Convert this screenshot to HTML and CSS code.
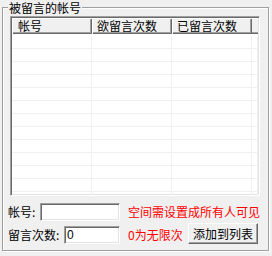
FILE: index.html
```html
<!DOCTYPE html>
<html>
<head>
<meta charset="utf-8">
<link rel="stylesheet" href="styles.css">
</head>
<body>
<div class="group">
  <div class="legend">被留言的帐号</div>
  <div class="list">
    <div class="header">
      <div class="hcell">帐号</div>
      <div class="hcell">欲留言次数</div>
      <div class="hcell">已留言次数</div>
      <div class="hcell filler"></div>
    </div>
    <div class="body">
      <div class="row"><div class="cell"></div><div class="cell"></div><div class="cell"></div><div class="cell filler"></div></div>
      <div class="row"><div class="cell"></div><div class="cell"></div><div class="cell"></div><div class="cell filler"></div></div>
      <div class="row"><div class="cell"></div><div class="cell"></div><div class="cell"></div><div class="cell filler"></div></div>
      <div class="row"><div class="cell"></div><div class="cell"></div><div class="cell"></div><div class="cell filler"></div></div>
      <div class="row"><div class="cell"></div><div class="cell"></div><div class="cell"></div><div class="cell filler"></div></div>
      <div class="row"><div class="cell"></div><div class="cell"></div><div class="cell"></div><div class="cell filler"></div></div>
      <div class="row"><div class="cell"></div><div class="cell"></div><div class="cell"></div><div class="cell filler"></div></div>
      <div class="row"><div class="cell"></div><div class="cell"></div><div class="cell"></div><div class="cell filler"></div></div>
      <div class="row"><div class="cell"></div><div class="cell"></div><div class="cell"></div><div class="cell filler"></div></div>
      <div class="row"><div class="cell"></div><div class="cell"></div><div class="cell"></div><div class="cell filler"></div></div>
      <div class="row"><div class="cell"></div><div class="cell"></div><div class="cell"></div><div class="cell filler"></div></div>
      <div class="row"><div class="cell"></div><div class="cell"></div><div class="cell"></div><div class="cell filler"></div></div>
      <div class="row"><div class="cell"></div><div class="cell"></div><div class="cell"></div><div class="cell filler"></div></div>
    </div>
  </div>
  <div class="form-row first">
    <span class="label w1">帐号:</span>
    <div class="input w-acc"></div>
    <span class="note">空间需设置成所有人可见</span>
  </div>
  <div class="form-row second">
    <span class="label w2">留言次数:</span>
    <div class="input w-cnt">0</div>
    <span class="note short">0为无限次</span>
    <div class="button">添加到列表</div>
  </div>
</div>
</body>
</html>
```

FILE: styles.css
```css
* { box-sizing: border-box; }
html, body {
  margin: 0;
  padding: 0;
  background: #f0f0f0;
  width: 272px;
  height: 256px;
  overflow: hidden;
  font-family: "Noto Sans CJK SC", "Liberation Sans", sans-serif;
  font-size: 12px;
  color: #000;
}
.group {
  position: relative;
  margin: 7px 0 0 2px;
  width: 267px;
  height: 244px;
  border: 1px solid #a0a0a0;
  box-shadow: inset 1px 1px 0 #fff, 1px 1px 0 #fff;
  padding: 8px 0 0 7px;
}
.legend {
  position: absolute;
  top: -8px;
  left: 5px;
  padding: 0 1px;
  line-height: 15px;
  height: 15px;
  background: #f0f0f0;
}
.list {
  width: 250px;
  height: 180px;
  background: #fff;
  border-top: 1px solid #a0a0a0;
  border-left: 1px solid #a0a0a0;
  border-right: 1px solid #fff;
  border-bottom: 1px solid #fff;
  box-shadow: inset 1px 1px 0 #696969, inset -1px -1px 0 #e3e3e3;
  padding: 1px;
  overflow: hidden;
}
.header {
  display: flex;
  height: 16px;
  background: #f0f0f0;
}
.hcell {
  width: 80px;
  height: 16px;
  line-height: 16px;
  padding-left: 5px;
  box-shadow: inset 1px 1px 0 #fff, inset -1px -1px 0 #696969, inset -2px -2px 0 #a0a0a0;
  white-space: nowrap;
  overflow: hidden;
}
.hcell:first-child { padding-left: 6px; }
.hcell.filler { width: 6px; padding: 0; box-shadow: inset 0 1px 0 #fff, inset 0 -1px 0 #696969, inset 0 -2px 0 #a0a0a0; }
.body {
  padding-top: 2px;
}
.row {
  display: flex;
  height: 13px;
  border-bottom: 1px solid #f0f0f0;
}
.cell {
  width: 80px;
  height: 12px;
  border-right: 1px solid #f0f0f0;
}
.cell.filler { width: 6px; }
.form-row {
  display: flex;
  margin-left: -2px;
}
.form-row.first {
  margin-top: 7px;
  height: 18px;
  align-items: center;
}
.form-row.second {
  margin-top: 2px;
  height: 21px;
  align-items: flex-end;
}
.label {
  line-height: 18px;
  height: 18px;
  white-space: nowrap;
}
.label.w1 { width: 32px; }
.label.w2 { width: 56px; }
.input {
  height: 18px;
  background: #fff;
  border-top: 1px solid #a0a0a0;
  border-left: 1px solid #a0a0a0;
  border-right: 1px solid #fff;
  border-bottom: 1px solid #fff;
  box-shadow: inset 1px 1px 0 #696969, inset -1px -1px 0 #e3e3e3;
  padding-left: 2px;
  line-height: 16px;
  font-family: "Liberation Sans", sans-serif;
  font-size: 12px;
}
.input.w-acc { width: 80px; }
.input.w-cnt { width: 56px; }
.note {
  margin-left: 8px;
  color: #ff0000;
  line-height: 18px;
  height: 18px;
  white-space: nowrap;
}
.note.short { width: 60px; }
.button {
  width: 70px;
  height: 21px;
  line-height: 19px;
  text-align: center;
  background: #f0f0f0;
  border-top: 1px solid #fff;
  border-left: 1px solid #fff;
  border-right: 1px solid #696969;
  border-bottom: 1px solid #696969;
  box-shadow: inset -1px -1px 0 #a0a0a0;
  white-space: nowrap;
}
```
